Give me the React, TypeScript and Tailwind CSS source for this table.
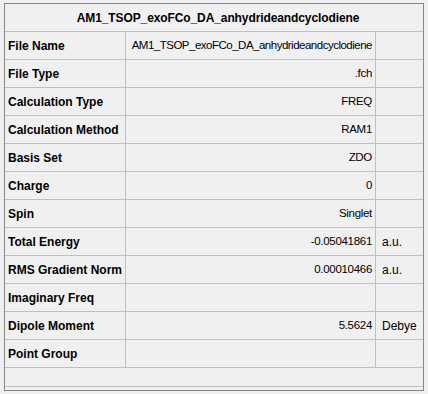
import React from 'react'

const rows: [string, string, string][] = [
  ['File Name', 'AM1_TSOP_exoFCo_DA_anhydrideandcyclodiene', ''],
  ['File Type', '.fch', ''],
  ['Calculation Type', 'FREQ', ''],
  ['Calculation Method', 'RAM1', ''],
  ['Basis Set', 'ZDO', ''],
  ['Charge', '0', ''],
  ['Spin', 'Singlet', ''],
  ['Total Energy', '-0.05041861', 'a.u.'],
  ['RMS Gradient Norm', '0.00010466', 'a.u.'],
  ['Imaginary Freq', '', ''],
  ['Dipole Moment', '5.5624', 'Debye'],
  ['Point Group', '', ''],
]

const App = () => {
  return (
    <div className="w-[428px] h-[394px] bg-[#f0f0f0] pt-[3px] pl-[4px] text-[12px] text-black" style={{ fontFamily: '"Liberation Sans", Arial, sans-serif' }}>
      <div className="w-[420px] h-[388px] border border-[#828790] flex flex-col">
        <div className="h-[28px] border-b border-[#c0c0c0] flex items-center justify-center font-bold tracking-[-0.1px] pl-[8px] shrink-0">
          AM1_TSOP_exoFCo_DA_anhydrideandcyclodiene
        </div>
        {rows.map(([label, value, unit]) => (
          <div key={label} className="h-[28px] border-b border-[#c0c0c0] flex shrink-0">
            <div className="w-[121px] border-r border-[#c0c0c0] flex items-center pl-[3px] font-bold">{label}</div>
            <div
              className={
                value.length > 20
                  ? 'w-[250px] border-r border-[#c0c0c0] flex items-center justify-end pr-[3px] text-[11.5px] tracking-[-0.5px] whitespace-nowrap'
                  : 'w-[250px] border-r border-[#c0c0c0] flex items-center justify-end pr-[3px] text-[11.5px] tracking-[-0.3px] whitespace-nowrap'
              }
            >
              {value}
            </div>
            <div className="flex-1 flex items-center pl-[6px]">{unit}</div>
          </div>
        ))}
        <div className="h-[19px] border-b border-[#c0c0c0] shrink-0"></div>
      </div>
    </div>
  )
}

export default App
